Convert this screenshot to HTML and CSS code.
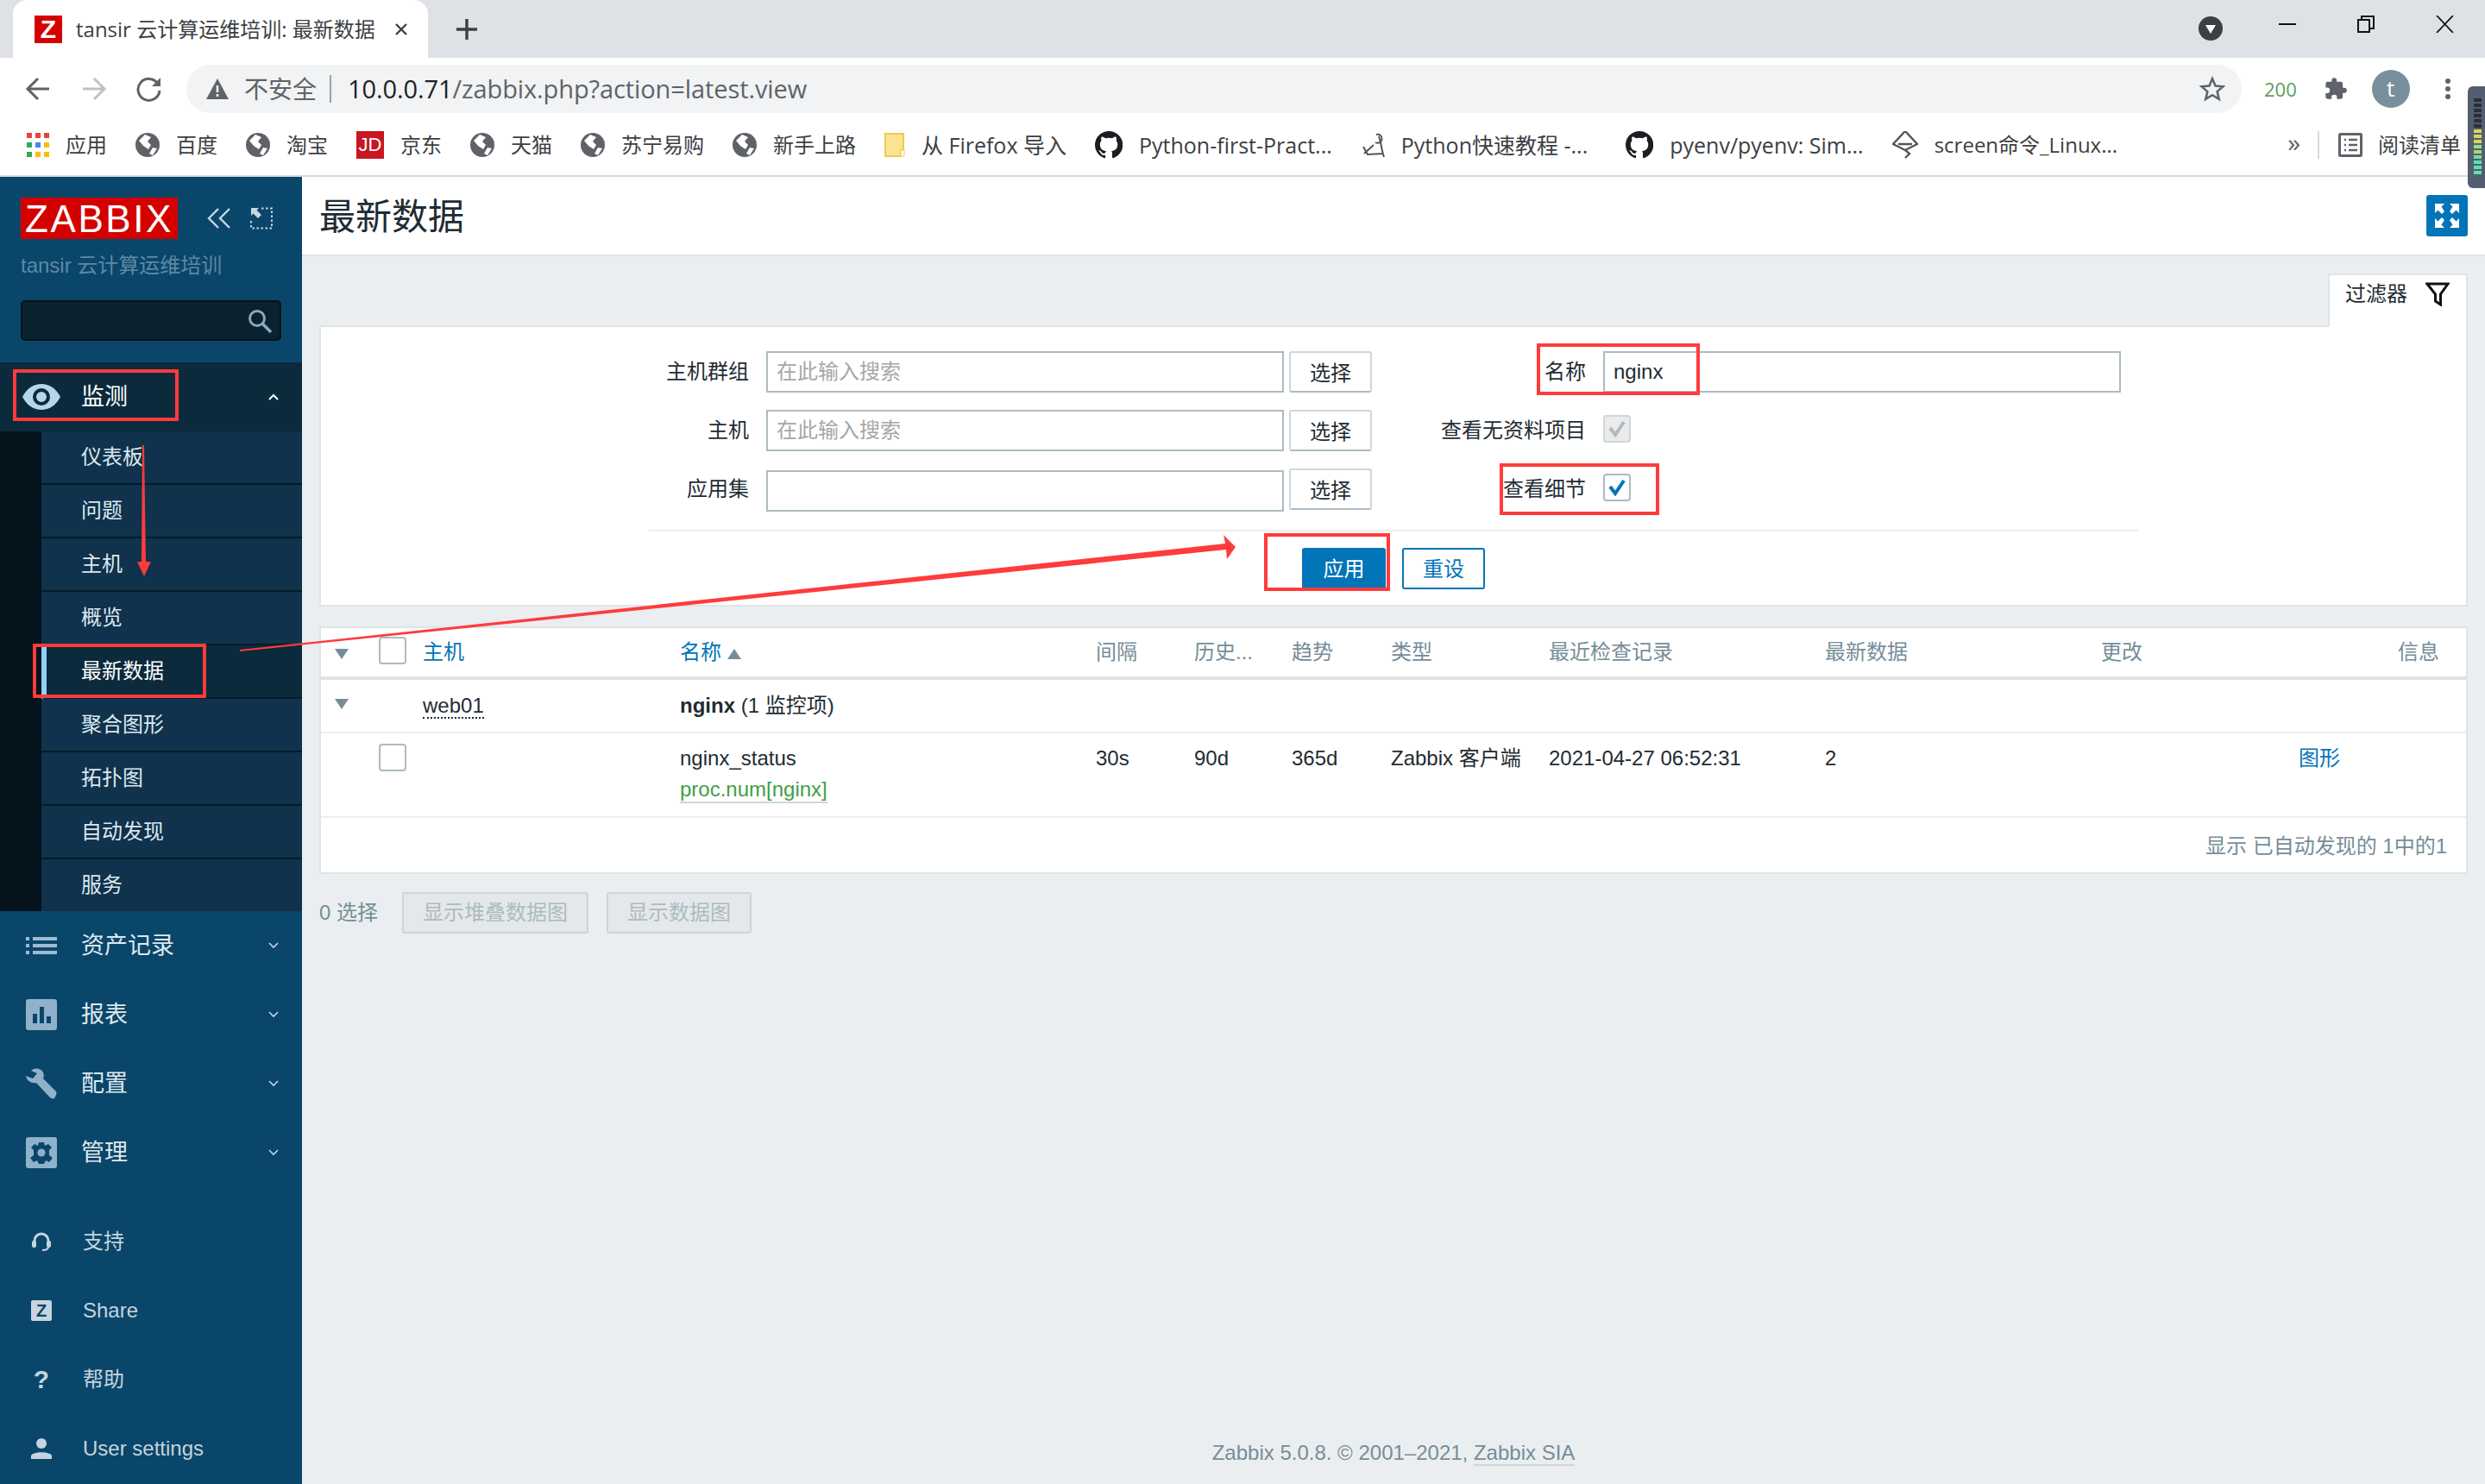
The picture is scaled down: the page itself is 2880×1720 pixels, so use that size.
FILE: index.html
```html
<!DOCTYPE html>
<html lang="zh">
<head>
    <meta charset="UTF-8">
    <title>tansir 云计算运维培训: 最新数据</title>
    <link rel="stylesheet" href="styles.css">
</head>
<body>
    <!-- 浏览器外框 -->
    <div class="browser">
        <div class="tabstrip">
            <div class="tab">
                <span class="favicon">Z</span>
                <span class="tab-title">tansir 云计算运维培训: 最新数据</span>
                <svg class="tab-close" width="16" height="16" viewBox="0 0 16 16"><path d="M2 2L14 14M14 2L2 14" stroke="#3c4043" stroke-width="2.400"/></svg>
            </div>
            <svg class="tab-new" width="26" height="26" viewBox="0 0 26 26"><path d="M13 1V25M1 13H25" stroke="#3c4043" stroke-width="3.400"/></svg>
            <div class="win-controls">
                <svg class="media-btn" width="28" height="28" viewBox="0 0 28 28"><circle cx="14" cy="14" r="14" fill="#3c4043"/><path d="M8 10H20L14 20Z" fill="#fff"/></svg>
                <svg class="win-min" width="20" height="4" viewBox="0 0 20 4"><path d="M0 2H20" stroke="#111" stroke-width="2"/></svg>
                <svg class="win-restore" width="20" height="20" viewBox="0 0 20 20"><path d="M1 5H14V19H1ZM5 5V1H19V15H14" fill="none" stroke="#111" stroke-width="2"/></svg>
                <svg class="win-close" width="21" height="20" viewBox="0 0 21 20"><path d="M1 0L20 20M20 0L1 20" stroke="#111" stroke-width="1.800"/></svg>
            </div>
        </div>
        <div class="toolbar">
            <svg class="nav-btn" width="30" height="30" viewBox="0 0 30 30"><path d="M28 15H4M15 3L3 15L15 27" fill="none" stroke="#5f6368" stroke-width="3"/></svg>
            <svg class="nav-btn nav-fwd" width="30" height="30" viewBox="0 0 30 30"><path d="M2 15H26M15 3L27 15L15 27" fill="none" stroke="#bdc1c6" stroke-width="3"/></svg>
            <svg class="nav-btn nav-reload" width="30" height="30" viewBox="0 0 30 30"><path d="M25 9A12.500 12.500 0 1 0 27 17" fill="none" stroke="#5f6368" stroke-width="3"/><path d="M28 2V12H18Z" fill="#5f6368"/></svg>
            <div class="urlbar">
                <svg class="warn-icon" width="26" height="24" viewBox="0 0 26 24"><path d="M13 0L26 24H0Z" fill="#5f6368"/><path d="M13 8V16M13 18V21" stroke="#f1f3f4" stroke-width="2.600"/></svg>
                <span class="not-secure">不安全</span>
                <span class="url-sep"></span>
                <span class="url"><b>10.0.0.71</b>/zabbix.php?action=latest.view</span>
                <svg class="star" width="30" height="30" viewBox="0 0 24 24"><path d="M12 2.500L14.800 9.200L22 9.800L16.500 14.500L18.200 21.500L12 17.800L5.800 21.500L7.500 14.500L2 9.800L9.200 9.200Z" fill="none" stroke="#5f6368" stroke-width="2"/></svg>
            </div>
            <span class="ext-count">200</span>
            <svg class="puzzle" width="28" height="28" viewBox="0 0 24 24"><path d="M20.500 11H19V7a2 2 0 0 0-2-2h-4V3.500a2.500 2.500 0 0 0-5 0V5H4a2 2 0 0 0-2 2v3.800h1.500a2.700 2.700 0 0 1 0 5.400H2V20a2 2 0 0 0 2 2h3.800v-1.500a2.700 2.700 0 0 1 5.400 0V22H17a2 2 0 0 0 2-2v-4h1.500a2.500 2.500 0 0 0 0-5z" fill="#5f6368"/></svg>
            <span class="avatar">t</span>
            <svg class="more" width="8" height="26" viewBox="0 0 8 26"><circle cx="4" cy="4" r="3" fill="#5f6368"/><circle cx="4" cy="13" r="3" fill="#5f6368"/><circle cx="4" cy="22" r="3" fill="#5f6368"/></svg>
        </div>
        <div class="bookmarks">
            <a class="bm">
                <svg width="26" height="28" viewBox="0 0 26 28">
                    <rect x="0" y="0" width="6" height="6" fill="#ea4335"/><rect x="10" y="0" width="6" height="6" fill="#ea4335"/><rect x="20" y="0" width="6" height="6" fill="#ea4335"/>
                    <rect x="0" y="11" width="6" height="6" fill="#34a853"/><rect x="10" y="11" width="6" height="6" fill="#4285f4"/><rect x="20" y="11" width="6" height="6" fill="#fbbc05"/>
                    <rect x="0" y="22" width="6" height="6" fill="#34a853"/><rect x="10" y="22" width="6" height="6" fill="#fbbc05"/><rect x="20" y="22" width="6" height="6" fill="#fbbc05"/>
                </svg>
                应用
            </a>
            <a class="bm"><svg class="globe" viewBox="0 0 28 28"><use href="#globe"/></svg>百度</a>
            <a class="bm"><svg class="globe" viewBox="0 0 28 28"><use href="#globe"/></svg>淘宝</a>
            <a class="bm"><span class="jd-icon">JD</span>京东</a>
            <a class="bm"><svg class="globe" viewBox="0 0 28 28"><use href="#globe"/></svg>天猫</a>
            <a class="bm"><svg class="globe" viewBox="0 0 28 28"><use href="#globe"/></svg>苏宁易购</a>
            <a class="bm"><svg class="globe" viewBox="0 0 28 28"><use href="#globe"/></svg>新手上路</a>
            <a class="bm bm-latin"><svg width="24" height="28" viewBox="0 0 24 28"><path d="M1 1H22V20H19V27H1Z" fill="#fde293" stroke="#f2c94c" stroke-width="2"/><path d="M19 27V20H23V27Z" fill="#fff" stroke="#f2c94c" stroke-width="1"/></svg>从 Firefox 导入</a>
            <a class="bm bm-latin"><svg class="gh" viewBox="0 0 16 16"><use href="#github"/></svg>Python-first-Pract...</a>
            <a class="bm bm-tutorial"><svg class="site-a" width="28" height="32" viewBox="0 0 28 32"><path d="M3 18L8 27L26 26M18 4A5 5 0 1 1 17 13M21 6C24 14 24 22 27 30M4 26L15 16" fill="none" stroke="#555" stroke-width="2"/></svg>Python快速教程 -...</a>
            <a class="bm bm-latin"><svg class="gh" viewBox="0 0 16 16"><use href="#github"/></svg>pyenv/pyenv: Sim...</a>
            <a class="bm"><svg width="30" height="32" viewBox="0 0 30 32"><path d="M15 0L29 15L15 22L1 15ZM7 15H23M15 22L20 26L15 31" fill="none" stroke="#555" stroke-width="2.400"/></svg>screen命令_Linux...</a>
            <span class="bm-more">»</span>
            <span class="bm-sep"></span>
            <a class="bm bm-reading"><svg width="28" height="28" viewBox="0 0 28 28"><rect x="1.500" y="1.500" width="25" height="25" rx="1" fill="none" stroke="#5f6368" stroke-width="3"/><path d="M7 8H9M12 8H22M7 14H9M12 14H22M7 20H9M12 20H22" stroke="#5f6368" stroke-width="2.400"/></svg>阅读清单</a>
        </div>
    </div>

    <svg width="0" height="0" class="defs">
        <defs>
            <symbol id="globe" viewBox="0 0 28 28">
                <circle cx="14" cy="14" r="14" fill="#5f6368"/>
                <path d="M11 2L18 5L14 10L18 14L15 19L9 15L4 9ZM20 17L25 18L20 26L16 24Z" fill="#fff"/>
            </symbol>
            <symbol id="github" viewBox="0 0 16 16">
                <path d="M8 0a8 8 0 0 0-2.530 15.590c.4.070.55-.170.55-.380v-1.340c-2.230.480-2.700-1.070-2.700-1.070-.360-.930-.890-1.180-.890-1.180-.730-.500.060-.490.060-.490.800.060 1.230.830 1.230.830.710 1.220 1.870.870 2.330.660.070-.520.280-.870.510-1.070-1.780-.200-3.640-.890-3.640-3.950 0-.870.310-1.590.820-2.150-.080-.200-.360-1.020.080-2.120 0 0 .670-.210 2.200.820a7.600 7.600 0 0 1 4 0c1.530-1.040 2.200-.820 2.200-.820.440 1.100.160 1.920.080 2.120.510.560.820 1.270.820 2.150 0 3.070-1.870 3.750-3.650 3.950.290.250.540.730.540 1.480v2.200c0 .210.150.460.550.380A8 8 0 0 0 8 0z" fill="#1b1f23"/>
            </symbol>
        </defs>
    </svg>

    <div class="app">
        <aside class="sidebar">
            <div class="brand">
                <span class="logo">ZABBIX</span>
                <svg class="collapse" width="28" height="24" viewBox="0 0 28 24"><path d="M13 1L2 12L13 23M26 1L15 12L26 23" fill="none" stroke="#c7d6e0" stroke-width="2.400"/></svg>
                <svg class="kiosk" width="26" height="26" viewBox="0 0 26 26"><path d="M13 1.500H25V24.500H1V14" fill="none" stroke="#c7d6e0" stroke-width="2" stroke-dasharray="2.500 2.500"/><path d="M1 1H10L7.500 3.500L13 9L9 13L3.500 7.500L1 10Z" fill="#c7d6e0"/></svg>
            </div>
            <div class="subtitle">tansir 云计算运维培训</div>
            <div class="side-search">
                <svg width="30" height="30" viewBox="0 0 30 30"><circle cx="12" cy="12" r="8.500" fill="none" stroke="#8aa9bc" stroke-width="3"/><path d="M18 18L28 28" stroke="#8aa9bc" stroke-width="3.600"/></svg>
            </div>

            <nav class="menu-open">
                <div class="menu-head">
                    <svg class="menu-icon" width="44" height="30" viewBox="0 0 44 30"><path d="M0 15C10-5 34-5 44 15C34 35 10 35 0 15Z" fill="#b5d6ea"/><circle cx="22" cy="15" r="8" fill="none" stroke="#0b2a3c" stroke-width="4"/></svg>
                    <span class="menu-label">监测</span>
                    <svg class="chev" width="12" height="8" viewBox="0 0 12 8"><path d="M1 7L6 2L11 7" fill="none" stroke="#fff" stroke-width="2"/></svg>
                </div>
                <ul class="submenu">
                    <li>仪表板</li>
                    <li>问题</li>
                    <li>主机</li>
                    <li>概览</li>
                    <li class="selected">最新数据</li>
                    <li>聚合图形</li>
                    <li>拓扑图</li>
                    <li>自动发现</li>
                    <li>服务</li>
                </ul>
            </nav>

            <div class="menu-item">
                <svg class="menu-icon" width="36" height="20" viewBox="0 0 36 20"><path d="M0 0H4V4H0ZM8 0H36V4H8ZM0 8H4V12H0ZM8 8H36V12H8ZM0 16H4V20H0ZM8 16H36V20H8Z" fill="#9dbcd1"/></svg>
                <span class="menu-label">资产记录</span>
                <svg class="chev" width="12" height="8" viewBox="0 0 12 8"><path d="M1 1L6 6L11 1" fill="none" stroke="#c7d6e0" stroke-width="1.600"/></svg>
            </div>
            <div class="menu-item">
                <svg class="menu-icon" width="36" height="36" viewBox="0 0 36 36"><rect width="36" height="36" rx="3" fill="#8fb2ca"/><path d="M8 17H13V28H8ZM16 9H21V28H16ZM24 20H29V28H24Z" fill="#0a466a"/></svg>
                <span class="menu-label">报表</span>
                <svg class="chev" width="12" height="8" viewBox="0 0 12 8"><path d="M1 1L6 6L11 1" fill="none" stroke="#c7d6e0" stroke-width="1.600"/></svg>
            </div>
            <div class="menu-item">
                <svg class="menu-icon" width="36" height="36" viewBox="0 0 36 36"><path d="M0 9L8 12L13 6L6 3C10-1 18 0 20 5C21 8 21 10 20 12L35 27C36 29 35 32 33 35C31 36 29 35 27 33L12 17C7 18 1 15 0 9Z" fill="#8fb2ca"/></svg>
                <span class="menu-label">配置</span>
                <svg class="chev" width="12" height="8" viewBox="0 0 12 8"><path d="M1 1L6 6L11 1" fill="none" stroke="#c7d6e0" stroke-width="1.600"/></svg>
            </div>
            <div class="menu-item">
                <svg class="menu-icon" width="36" height="36" viewBox="0 0 36 36"><rect width="36" height="36" rx="3" fill="#8fb2ca"/><path d="M15 6H21L22 10L26 8L30 12L27 15V21L31 24L27 29L23 27L21 31H15L13 27L9 29L5 24L9 21V15L6 12L10 8L14 10Z" fill="#0a466a"/><circle cx="18" cy="18" r="4.500" fill="#8fb2ca"/></svg>
                <span class="menu-label">管理</span>
                <svg class="chev" width="12" height="8" viewBox="0 0 12 8"><path d="M1 1L6 6L11 1" fill="none" stroke="#c7d6e0" stroke-width="1.600"/></svg>
            </div>

            <div class="side-bottom">
                <div class="bottom-item">
                    <span class="bottom-icon"><svg width="22" height="24" viewBox="0 0 22 24"><path d="M3 14V11A8 8 0 0 1 19 11V14" fill="none" stroke="#c5d4de" stroke-width="3"/><rect x="0" y="11" width="5" height="8" rx="2" fill="#c5d4de"/><rect x="17" y="11" width="5" height="8" rx="2" fill="#c5d4de"/><path d="M19 18C19 21 16 22 12 22" fill="none" stroke="#c5d4de" stroke-width="2"/></svg></span>
                    支持
                </div>
                <div class="bottom-item">
                    <span class="bottom-icon"><span class="z-box">Z</span></span>
                    Share
                </div>
                <div class="bottom-item">
                    <span class="bottom-icon help-mark">?</span>
                    帮助
                </div>
                <div class="bottom-item">
                    <span class="bottom-icon"><svg width="24" height="24" viewBox="0 0 24 24"><circle cx="12" cy="6" r="6" fill="#c5d4de"/><path d="M0 24V20C3 15 21 15 24 20V24Z" fill="#c5d4de"/></svg></span>
                    User settings
                </div>
            </div>
        </aside>

        <main class="content">
            <header class="page-head">
                <h1>最新数据</h1>
                <button class="fullscreen">
                    <svg width="30" height="30" viewBox="0 0 30 30"><path d="M1 1H12L8.500 4.500L12 10L9 13L4.500 8.500L1 12ZM29 1H18L21.500 4.500L18 10L21 13L25.500 8.500L29 12ZM1 29H12L8.500 25.500L12 20L9 17L4.500 21.500L1 18ZM29 29H18L21.500 25.500L18 20L21 17L25.500 21.500L29 18Z" fill="#fff"/></svg>
                </button>
            </header>

            <div class="page-body">
                <div class="filter-tabs">
                    <div class="filter-tab">
                        过滤器
                        <svg width="28" height="28" viewBox="0 0 28 28"><path d="M2 2H26L17.500 14V26L11.500 22V14Z" fill="none" stroke="#111" stroke-width="3"/></svg>
                    </div>
                </div>

                <section class="filter-panel">
                    <div class="filter-row">
                        <label class="left-label">主机群组</label>
                        <input class="text-input wide" placeholder="在此输入搜索">
                        <button class="btn-pick">选择</button>
                        <label class="right-label">名称</label>
                        <input class="text-input wide" value="nginx">
                    </div>
                    <div class="filter-row">
                        <label class="left-label">主机</label>
                        <input class="text-input wide" placeholder="在此输入搜索">
                        <button class="btn-pick">选择</button>
                        <label class="right-label">查看无资料项目</label>
                        <span class="checkbox disabled">
                            <svg width="22" height="20" viewBox="0 0 22 20"><path d="M3 9L9 17L19 2" fill="none" stroke="#acbbc2" stroke-width="4"/></svg>
                        </span>
                    </div>
                    <div class="filter-row">
                        <label class="left-label">应用集</label>
                        <input class="text-input wide low">
                        <button class="btn-pick">选择</button>
                        <label class="right-label">查看细节</label>
                        <span class="checkbox low">
                            <svg width="22" height="20" viewBox="0 0 22 20"><path d="M3 9L9 17L19 2" fill="none" stroke="#0275b8" stroke-width="4"/></svg>
                        </span>
                    </div>
                    <div class="filter-line"></div>
                    <div class="filter-actions">
                        <button class="btn-apply">应用</button>
                        <button class="btn-reset">重设</button>
                    </div>
                </section>

                <section class="list-panel">
                    <table class="data-table">
                        <colgroup>
                            <col class="c-arrow"><col class="c-check"><col class="c-host"><col class="c-name">
                            <col class="c-int"><col class="c-hist"><col class="c-trend"><col class="c-type">
                            <col class="c-last"><col class="c-value"><col class="c-change"><col class="c-graph"><col>
                        </colgroup>
                        <thead>
                            <tr>
                                <th class="arrow-cell"><span class="tri-down"></span></th>
                                <th><span class="checkbox head-check"></span></th>
                                <th><a>主机</a></th>
                                <th><a>名称</a> <span class="tri-up"></span></th>
                                <th>间隔</th>
                                <th>历史...</th>
                                <th>趋势</th>
                                <th>类型</th>
                                <th>最近检查记录</th>
                                <th>最新数据</th>
                                <th>更改</th>
                                <th></th>
                                <th class="info-col">信息</th>
                            </tr>
                        </thead>
                        <tbody>
                            <tr class="group-row">
                                <td class="arrow-cell"><span class="tri-down tri-row"></span></td>
                                <td></td>
                                <td><span class="host-link">web01</span></td>
                                <td colspan="10"><b>nginx</b> (1 监控项)</td>
                            </tr>
                            <tr class="item-row">
                                <td></td>
                                <td class="check-cell"><span class="checkbox"></span></td>
                                <td></td>
                                <td>nginx_status<br><span class="item-key">proc.num[nginx]</span></td>
                                <td>30s</td>
                                <td>90d</td>
                                <td>365d</td>
                                <td>Zabbix 客户端</td>
                                <td>2021-04-27 06:52:31</td>
                                <td>2</td>
                                <td></td>
                                <td><a>图形</a></td>
                                <td></td>
                            </tr>
                        </tbody>
                    </table>
                    <div class="table-stats">显示 已自动发现的 1中的1</div>
                </section>

                <div class="action-bar">
                    <span class="sel-count">0 选择</span>
                    <button class="btn-off">显示堆叠数据图</button>
                    <button class="btn-off">显示数据图</button>
                </div>
            </div>

            <footer class="page-foot">Zabbix 5.0.8. © 2001–2021, <a>Zabbix SIA</a></footer>
        </main>
    </div>

    <!-- 右上角的音量小窗 -->
    <div class="meter"><div class="meter-bars"></div></div>

    <!-- 截图上的红色标注 -->
    <svg class="notes" viewBox="0 0 2880 1720">
        <g fill="none" stroke="#ff3b3b" stroke-width="4">
            <rect x="17" y="430" width="188" height="56"/>
            <rect x="40" y="748" width="197" height="59"/>
            <rect x="1783" y="400" width="185" height="56"/>
            <rect x="1740" y="539" width="181" height="56"/>
            <rect x="1467" y="620" width="142" height="63"/>
        </g>
        <path d="M278 753L1420 630L1418 620L1432 634L1422 648L1421 637L278 755Z" fill="#ff3b3b"/>
        <path d="M165 516H167L169 651H175L167 668L159 651H164Z" fill="#ff3b3b"/>
    </svg>
</body>
</html>
```

FILE: styles.css
```css
* {
    margin: 0;
    padding: 0;
    box-sizing: border-box;
}

html, body {
    width: 2880px;
    height: 1720px;
    overflow: hidden;
}

body {
    position: relative;
    display: flex;
    flex-direction: column;
    background: #ebeef0;
    color: #1f2c33;
    font-family: "Liberation Sans", "Noto Sans CJK SC", sans-serif;
    font-size: 24px;
    line-height: 30px;
}

.defs {
    position: absolute;
}

/* 浏览器外框 */
.browser {
    flex: none;
    height: 205px;
    background: #fff;
    font-family: "Open Sans", "Noto Sans CJK SC", sans-serif;
    color: #3c4043;
    border-bottom: 2px solid #d8dadf;
}

.tabstrip {
    display: flex;
    align-items: center;
    height: 67px;
    background: #dee1e6;
}

.tab {
    display: flex;
    align-items: center;
    align-self: stretch;
    width: 481px;
    margin-left: 15px;
    padding-left: 25px;
    background: #fff;
    border-radius: 16px 16px 0 0;
}

.favicon {
    width: 32px;
    height: 32px;
    background: #d40000;
    color: #fff;
    font-family: "Liberation Sans", sans-serif;
    font-weight: bold;
    font-size: 30px;
    line-height: 32px;
    text-align: center;
}

.tab-title {
    width: 349px;
    margin-left: 16px;
    font-size: 24px;
    white-space: nowrap;
}

.tab-close {
    margin-left: 20px;
}

.tab-new {
    margin-left: 32px;
}

.win-controls {
    display: flex;
    align-items: flex-start;
    margin-left: auto;
    height: 100%;
}

.media-btn {
    margin-top: 19px;
    margin-right: 65px;
}

.win-min {
    margin-top: 26px;
    margin-right: 71px;
}

.win-restore {
    margin-top: 18px;
    margin-right: 71px;
}

.win-close {
    margin-top: 18px;
    margin-right: 36px;
}

.toolbar {
    display: flex;
    align-items: center;
    height: 69px;
    padding-top: 8px;
    padding-bottom: 5px;
}

.nav-btn {
    margin-left: 29px;
}

.nav-fwd {
    margin-left: 35px;
}

.nav-reload {
    margin-left: 34px;
}

.urlbar {
    display: flex;
    align-items: center;
    width: 2382px;
    height: 56px;
    margin-left: 28px;
    padding-left: 23px;
    background: #f1f3f4;
    border-radius: 28px;
}

.not-secure {
    margin-left: 18px;
    font-size: 28px;
    color: #5f6368;
}

.url-sep {
    width: 2px;
    height: 32px;
    margin: 0 19px 0 15px;
    background: #9aa0a6;
}

.url {
    font-size: 29px;
    letter-spacing: -0.1px;
    color: #5f6368;
    white-space: nowrap;
}

.url b {
    font-weight: normal;
    color: #202124;
}

.star {
    margin-left: auto;
    margin-right: 19px;
}

.ext-count {
    margin-left: 26px;
    font-size: 22px;
    color: #5c9e5f;
}

.puzzle {
    margin-left: 31px;
}

.avatar {
    width: 44px;
    height: 44px;
    margin-left: 28px;
    border-radius: 50%;
    background: #78909c;
    color: #fff;
    font-size: 26px;
    line-height: 42px;
    text-align: center;
}

.more {
    margin-left: 40px;
}

.bookmarks {
    display: flex;
    align-items: center;
    height: 67px;
    padding: 0 28px 3px 31px;
    font-size: 24px;
    white-space: nowrap;
}

.bm {
    display: flex;
    align-items: center;
    gap: 19px;
    margin-right: 33px;
}

.bm-latin {
    font-size: 25px;
}

.bm-tutorial {
    font-size: 25px;
    margin-right: 44px;
}

.globe {
    width: 28px;
    height: 28px;
}

.gh {
    width: 32px;
    height: 32px;
}

.jd-icon {
    width: 32px;
    height: 32px;
    background: #c81623;
    color: #fff;
    font-family: "Liberation Sans", sans-serif;
    font-size: 22px;
    line-height: 32px;
    text-align: center;
}

.bm-more {
    margin-left: auto;
    font-size: 30px;
    line-height: 30px;
    margin-top: -6px;
    color: #5f6368;
}

.bm-sep {
    width: 2px;
    height: 32px;
    margin: 0 22px 0 20px;
    background: #d8dadf;
}

.bm-reading {
    margin-right: 0;
    gap: 18px;
}

/* 页面主体 */
.app {
    flex: 1;
    display: flex;
    min-height: 0;
}

.sidebar {
    flex: none;
    width: 350px;
    background: #0a466a;
    color: #dfe8ee;
}

.brand {
    display: flex;
    align-items: center;
    padding: 24px 0 0 24px;
}

.logo {
    width: 182px;
    height: 48px;
    background: #d40000;
    color: #fff;
    font-size: 44px;
    letter-spacing: 2.600px;
    line-height: 49px;
    text-align: center;
}

.collapse {
    margin-left: 34px;
}

.kiosk {
    margin-left: 22px;
}

.subtitle {
    margin: 16px 0 0 24px;
    font-size: 24px;
    line-height: 30px;
    color: #5c8aa6;
}

.side-search {
    display: flex;
    align-items: center;
    justify-content: flex-end;
    width: 302px;
    height: 47px;
    margin: 25px 0 0 24px;
    padding-right: 8px;
    background: #0a2130;
    border: 2px solid #04131c;
    border-radius: 5px;
}

.menu-open {
    margin-top: 25px;
}

.menu-head {
    display: flex;
    align-items: center;
    height: 80px;
    padding-left: 26px;
    background: #0b2a3c;
    color: #fff;
}

.menu-icon {
    flex: none;
}

.menu-head .menu-label {
    margin-left: 24px;
}

.menu-label {
    font-size: 27px;
    margin-left: 28px;
}

.chev {
    margin-left: auto;
    margin-right: 27px;
}

.submenu {
    margin: 0;
    list-style: none;
    padding-left: 48px;
    background: #04131c;
}

.submenu li {
    height: 62px;
    padding-left: 46px;
    line-height: 60px;
    background: #10324c;
    border-bottom: 2px solid #071a27;
    color: #dbe8f0;
}

.submenu li:last-child {
    height: 60px;
    border-bottom: none;
}

.submenu .selected {
    padding-left: 40px;
    background: #0b2a3c;
    border-left: 6px solid #8fd0ff;
    color: #fff;
}

.menu-item {
    display: flex;
    align-items: center;
    height: 80px;
    padding-left: 30px;
    color: #dfe8ee;
}

.side-bottom {
    margin-top: 23px;
}

.bottom-item {
    display: flex;
    align-items: center;
    height: 80px;
    color: #c5d4de;
}

.bottom-icon {
    display: flex;
    justify-content: center;
    width: 96px;
}

.z-box {
    width: 24px;
    height: 24px;
    background: #c5d4de;
    border-radius: 2px;
    color: #0a466a;
    font-weight: bold;
    font-size: 20px;
    line-height: 24px;
    text-align: center;
}

.help-mark {
    font-size: 30px;
    font-weight: bold;
    line-height: 30px;
}

.content {
    flex: 1;
    display: flex;
    flex-direction: column;
    min-width: 0;
}

.page-head {
    flex: none;
    display: flex;
    align-items: center;
    justify-content: space-between;
    height: 92px;
    padding: 0 20px 0 20px;
    background: #fff;
    border-bottom: 2px solid #dfe4e7;
}

.page-head h1 {
    margin-top: 3px;
    font-size: 42px;
    line-height: 50px;
    font-weight: normal;
}

.fullscreen {
    display: flex;
    align-items: center;
    justify-content: center;
    width: 48px;
    height: 48px;
    border: none;
    border-radius: 3px;
    background: #0275b8;
}

.page-body {
    padding: 20px 20px 0 20px;
}

.filter-tabs {
    display: flex;
    justify-content: flex-end;
    margin-bottom: -2px;
    position: relative;
}

.filter-tab {
    display: flex;
    gap: 21px;
    width: 162px;
    height: 62px;
    padding: 8px 0 0 18px;
    background: #fff;
    border: 2px solid #dfe4e7;
    border-bottom: none;
    line-height: 28px;
}

.filter-panel {
    height: 326px;
    padding-top: 28px;
    background: #fff;
    border: 2px solid #dfe4e7;
}

.filter-tabs + .filter-panel {
    position: relative;
    z-index: -1;
}

.filter-row {
    display: flex;
    align-items: flex-start;
    height: 48px;
    margin-bottom: 20px;
    line-height: 48px;
}

.left-label {
    width: 496px;
    margin-right: 20px;
    text-align: right;
}

.right-label {
    width: 248px;
    margin-right: 20px;
    text-align: right;
}

.text-input {
    height: 48px;
    padding: 0 10px;
    border: 2px solid #acbbc2;
    font: inherit;
    color: #1f2c33;
    outline: none;
}

.text-input::placeholder {
    color: #a7a7a7;
}

.wide {
    width: 600px;
}

.low {
    margin-top: 2px;
}

.btn-pick {
    width: 96px;
    height: 48px;
    margin-left: 6px;
    background: #fff;
    border: 2px solid #cfd6da;
    border-bottom-color: #acbbc2;
    border-radius: 3px;
    font: inherit;
    color: #1f2c33;
}

.checkbox {
    display: flex;
    align-items: center;
    justify-content: center;
    width: 32px;
    height: 32px;
    background: #fff;
    border: 2px solid #acbbc2;
    border-radius: 4px;
}

.filter-row .checkbox {
    margin-top: 6px;
}

.checkbox.disabled {
    background: #ebebeb;
    border-color: #cfd6da;
}

.filter-row .checkbox.low {
    margin-top: 6px;
}

.head-check {
    margin-bottom: 4px;
}

.filter-line {
    height: 2px;
    margin: 23px 380px 0 380px;
    background: #ebeef0;
}

.filter-actions {
    display: flex;
    gap: 19px;
    margin: 19px 0 0 1137px;
}

.btn-apply,
.btn-reset {
    width: 97px;
    height: 48px;
    padding-top: 2px;
    border: 2px solid #0275b8;
    border-radius: 3px;
    font: inherit;
}

.btn-apply {
    background: #0275b8;
    color: #fff;
}

.btn-reset {
    width: 96px;
    background: #fff;
    color: #0275b8;
}

.list-panel {
    margin-top: 23px;
    background: #fff;
    border: 2px solid #dfe4e7;
}

.data-table {
    width: 100%;
    table-layout: fixed;
    border-spacing: 0;
}

.c-arrow { width: 67px; }
.c-check { width: 51px; }
.c-host { width: 298px; }
.c-name { width: 482px; }
.c-int { width: 114px; }
.c-hist { width: 113px; }
.c-trend { width: 115px; }
.c-type { width: 183px; }
.c-last { width: 320px; }
.c-value { width: 320px; }
.c-change { width: 229px; }
.c-graph { width: 115px; }

.data-table th {
    height: 60px;
    padding: 0;
    text-align: left;
    font-weight: normal;
    color: #768d99;
    border-bottom: 4px solid #dfe4e7;
}

.data-table th a,
.data-table td a {
    color: #0275b8;
}

.arrow-cell {
    padding-left: 16px !important;
}

.tri-down {
    display: inline-block;
    border-left: 8px solid transparent;
    border-right: 8px solid transparent;
    border-top: 12px solid #768d99;
}

.tri-up {
    display: inline-block;
    border-left: 8px solid transparent;
    border-right: 8px solid transparent;
    border-bottom: 12px solid #768d99;
}

.tri-row {
    margin-bottom: 4px;
}

.info-col {
    padding-left: 0 !important;
}

.group-row td {
    height: 62px;
    padding: 0;
    border-bottom: 2px solid #ebeef0;
}

.host-link {
    border-bottom: 2px dotted #1f2c33;
}

.item-row td {
    height: 98px;
    padding: 14px 0 0;
    vertical-align: top;
    line-height: 30px;
    border-bottom: 2px solid #ebeef0;
}

.item-row .check-cell {
    padding-top: 12px;
}

.item-key {
    display: inline-block;
    margin-top: 7px;
    color: #429e47;
    border-bottom: 2px solid #cfd6da;
    line-height: 28px;
}

.table-stats {
    height: 63px;
    padding-right: 22px;
    line-height: 66px;
    text-align: right;
    color: #768d99;
}

.action-bar {
    display: flex;
    align-items: center;
    margin-top: 21px;
    height: 48px;
    color: #768d99;
}

.sel-count {
    width: 96px;
}

.btn-off {
    height: 48px;
    padding: 0 22px;
    margin-right: 21px;
    background: #e4e8ea;
    border: 2px solid #ccd4d8;
    border-radius: 3px;
    font: inherit;
    color: #acbbc2;
}

.page-foot {
    margin-top: auto;
    height: 72px;
    text-align: center;
    color: #768d99;
    line-height: 72px;
}

.page-foot a {
    border-bottom: 2px solid #cfd6da;
}

/* 压在页面上的东西 */
.meter {
    position: absolute;
    top: 100px;
    left: 2860px;
    width: 24px;
    height: 118px;
    padding: 14px 0 0 7px;
    background: #555e70;
    border-radius: 6px 0 0 6px;
}

.meter-bars {
    width: 9px;
    height: 90px;
    background: repeating-linear-gradient(to bottom, transparent 0 4px, #555e70 4px 6px),
        linear-gradient(to bottom, #2a2f3a 0 40%, #d8d65a 40% 60%, #9fdc7c 60% 75%, #5fe0b0 75%);
}

.notes {
    position: absolute;
    top: 0;
    left: 0;
    width: 2880px;
    height: 1720px;
    pointer-events: none;
}
```
